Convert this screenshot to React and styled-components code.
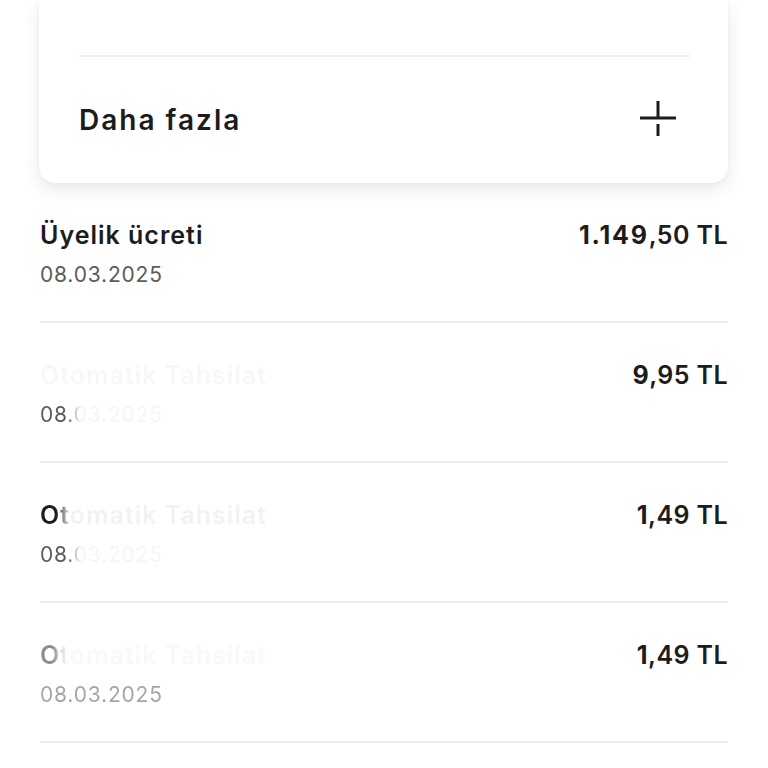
import styled, { createGlobalStyle } from "styled-components";

const GlobalStyle = createGlobalStyle`
  html, body {
    margin: 0;
    padding: 0;
    background: #ffffff;
  }
  body {
    font-family: "Inter", "Liberation Sans", sans-serif;
    color: #1c1c1c;
  }
`;

const Page = styled.div`
  width: 768px;
  min-height: 768px;
  padding: 0 40px 0 39px;
  box-sizing: border-box;
  overflow: hidden;
`;

const Card = styled.div`
  background: #ffffff;
  border-radius: 0 0 16px 16px;
  box-shadow: 0 6px 18px rgba(0, 0, 0, 0.09), 0 1px 4px rgba(0, 0, 0, 0.04);
  padding: 0 38px 0 40px;
`;

const CardRow = styled.div`
  display: flex;
  align-items: center;
  justify-content: space-between;
  height: ${(p) => p.$h}px;
  border-bottom: ${(p) => (p.$line ? "2px solid #efefef" : "none")};
`;

const MoreLabel = styled.span`
  font-size: 28px;
  font-weight: 600;
  letter-spacing: 2px;
`;

const PlusWrap = styled.span`
  display: flex;
  margin-right: 12px;
`;

const List = styled.div`
  display: flex;
  flex-direction: column;
  padding-left: 1px;
`;

const Item = styled.div`
  display: flex;
  justify-content: space-between;
  align-items: flex-start;
  height: 140px;
  box-sizing: border-box;
  padding-top: 37px;
  border-bottom: 2px solid #ebebeb;
`;

const Left = styled.div`
  display: flex;
  flex-direction: column;
  gap: 12px;
`;

const fadeMask = (p) =>
  p.$fade
    ? `-webkit-mask-image: linear-gradient(90deg, #000 ${p.$fade}px, rgba(0,0,0,0.06) ${p.$fade + 14}px);
       mask-image: linear-gradient(90deg, #000 ${p.$fade}px, rgba(0,0,0,0.06) ${p.$fade + 14}px);`
    : "";

const Title = styled.span`
  font-size: 25px;
  font-weight: 600;
  line-height: 30px;
  letter-spacing: 1px;
  color: #1c1c1c;
  opacity: ${(p) => p.$dim ?? 1};
  ${fadeMask}
`;

const DateText = styled.span`
  font-size: 21px;
  line-height: 26px;
  letter-spacing: 0.8px;
  color: #5c5c5c;
  opacity: ${(p) => p.$dim ?? 1};
  ${fadeMask}
`;

const Amount = styled.span`
  font-size: 25px;
  font-weight: 600;
  line-height: 30px;
  color: #1c1c1c;
  letter-spacing: 0.4px;
`;

const Whole = styled.span`
  font-weight: 700;
  letter-spacing: ${(p) => (p.$long ? "1.8px" : "0.4px")};
`;

function PlusIcon() {
  return (
    <svg width="38" height="38" viewBox="0 0 38 38">
      <line x1="0" y1="17" x2="36" y2="17" stroke="#1c1c1c" strokeWidth="3" />
      <line x1="18" y1="0" x2="18" y2="16" stroke="#1c1c1c" strokeWidth="3" />
      <line x1="18" y1="23" x2="18" y2="35" stroke="#1c1c1c" strokeWidth="3" />
    </svg>
  );
}

const items = [
  { title: "Üyelik ücreti", date: "08.03.2025", whole: "1.149", rest: ",50 TL" },
  { title: "Otomatik Tahsilat", titleDim: 0.03, date: "08.03.2025", dateFade: 26, whole: "9", rest: ",95 TL" },
  { title: "Otomatik Tahsilat", titleFade: 16, date: "08.03.2025", dateFade: 26, whole: "1", rest: ",49 TL" },
  { title: "Otomatik Tahsilat", titleFade: 12, titleDim: 0.5, date: "08.03.2025", dateDim: 0.55, whole: "1", rest: ",49 TL" },
];

export default function App() {
  return (
    <Page>
      <GlobalStyle />
      <Card>
        <CardRow $h={55} $line />
        <CardRow $h={126}>
          <MoreLabel>Daha fazla</MoreLabel>
          <PlusWrap>
            <PlusIcon />
          </PlusWrap>
        </CardRow>
      </Card>
      <List>
        {items.map((it, i) => (
          <Item key={i}>
            <Left>
              <Title $fade={it.titleFade} $dim={it.titleDim}>{it.title}</Title>
              <DateText $fade={it.dateFade} $dim={it.dateDim}>{it.date}</DateText>
            </Left>
            <Amount>
              <Whole $long={it.whole.length > 2}>{it.whole}</Whole>
              {it.rest}
            </Amount>
          </Item>
        ))}
      </List>
    </Page>
  );
}
